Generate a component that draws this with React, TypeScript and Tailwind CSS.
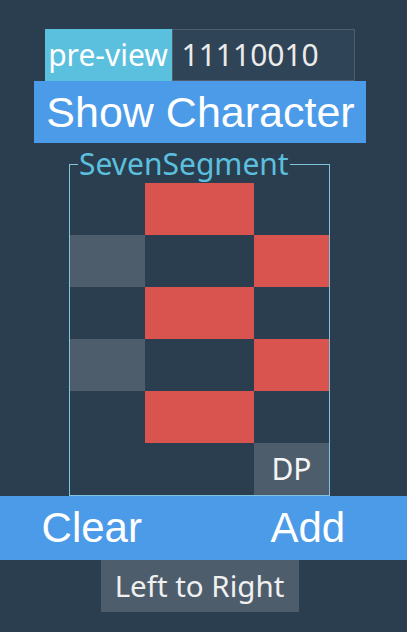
import React from "react";

const bits = "11110010";

function Cell({ on, seg, label }: { on?: boolean; seg?: boolean; label?: string }) {
  const bg = !seg ? "bg-transparent" : on ? "bg-[#d9534f]" : "bg-[#4e5d6c]";
  return (
    <div className={`h-[52px] ${bg} flex items-center justify-center text-[30px] leading-[52px] text-[#f5f5f5]`} style={{ fontFamily: '"Noto Sans", sans-serif' }}>
      {label}
    </div>
  );
}

export default function App() {
  const [a, b, c, d, e, f, g, dp] = bits.split("").map((x) => x === "1");
  return (
    <div className="min-h-screen w-full bg-[#2b3e50] pt-[29px]" style={{ fontFamily: '"Noto Sans", sans-serif' }}>
      <div className="w-[399px] flex flex-col items-center">
        <div className="flex w-[310px] h-[52px]">
          <div className="w-[127px] h-[52px] bg-[#5bc0de] text-white text-[30px] leading-[52px] flex justify-center">
            pre-view
          </div>
          <div className="flex-1 h-[52px] bg-[#2f4457] border border-[#4e5d6c] text-[#ebebeb] text-[30px] leading-[50px] pl-[9px]">
            {bits}
          </div>
        </div>
        <button
          className="w-[332px] h-[62px] bg-[#4c9be8] text-white text-[43px] leading-[62px] pl-[2px] text-center"
          style={{ fontFamily: '"Liberation Sans", Arial, sans-serif' }}
        >
          Show Character
        </button>
        <fieldset className="mt-[2px] w-[261px] border border-[#7fc3dc] p-0 m-0">
          <legend className="ml-[8px] px-[1px] text-[30px] leading-[38px] text-[#5bc0de]">SevenSegment</legend>
          <div className="grid grid-cols-[75px_109px_75px]">
            <Cell />
            <Cell seg on={a} />
            <Cell />
            <Cell seg on={f} />
            <Cell />
            <Cell seg on={b} />
            <Cell />
            <Cell seg on={g} />
            <Cell />
            <Cell seg on={e} />
            <Cell />
            <Cell seg on={c} />
            <Cell />
            <Cell seg on={d} />
            <Cell />
            <Cell />
            <Cell />
            <Cell seg on={dp} label="DP" />
          </div>
        </fieldset>
      </div>
      <div
        className="grid grid-cols-2 w-full h-[64px] bg-[#4c9be8] text-white text-[42px] leading-[64px]"
        style={{ fontFamily: '"Liberation Sans", Arial, sans-serif' }}
      >
        <button className="pr-[20px] text-center">Clear</button>
        <button className="pl-[5px] text-center">Add</button>
      </div>
      <div className="w-[399px] flex justify-center">
        <button className="w-[198px] h-[52px] bg-[#4e5d6c] text-[#f0f0f0] text-[29.5px] leading-[52px] text-center">
          Left to Right
        </button>
      </div>
    </div>
  );
}
